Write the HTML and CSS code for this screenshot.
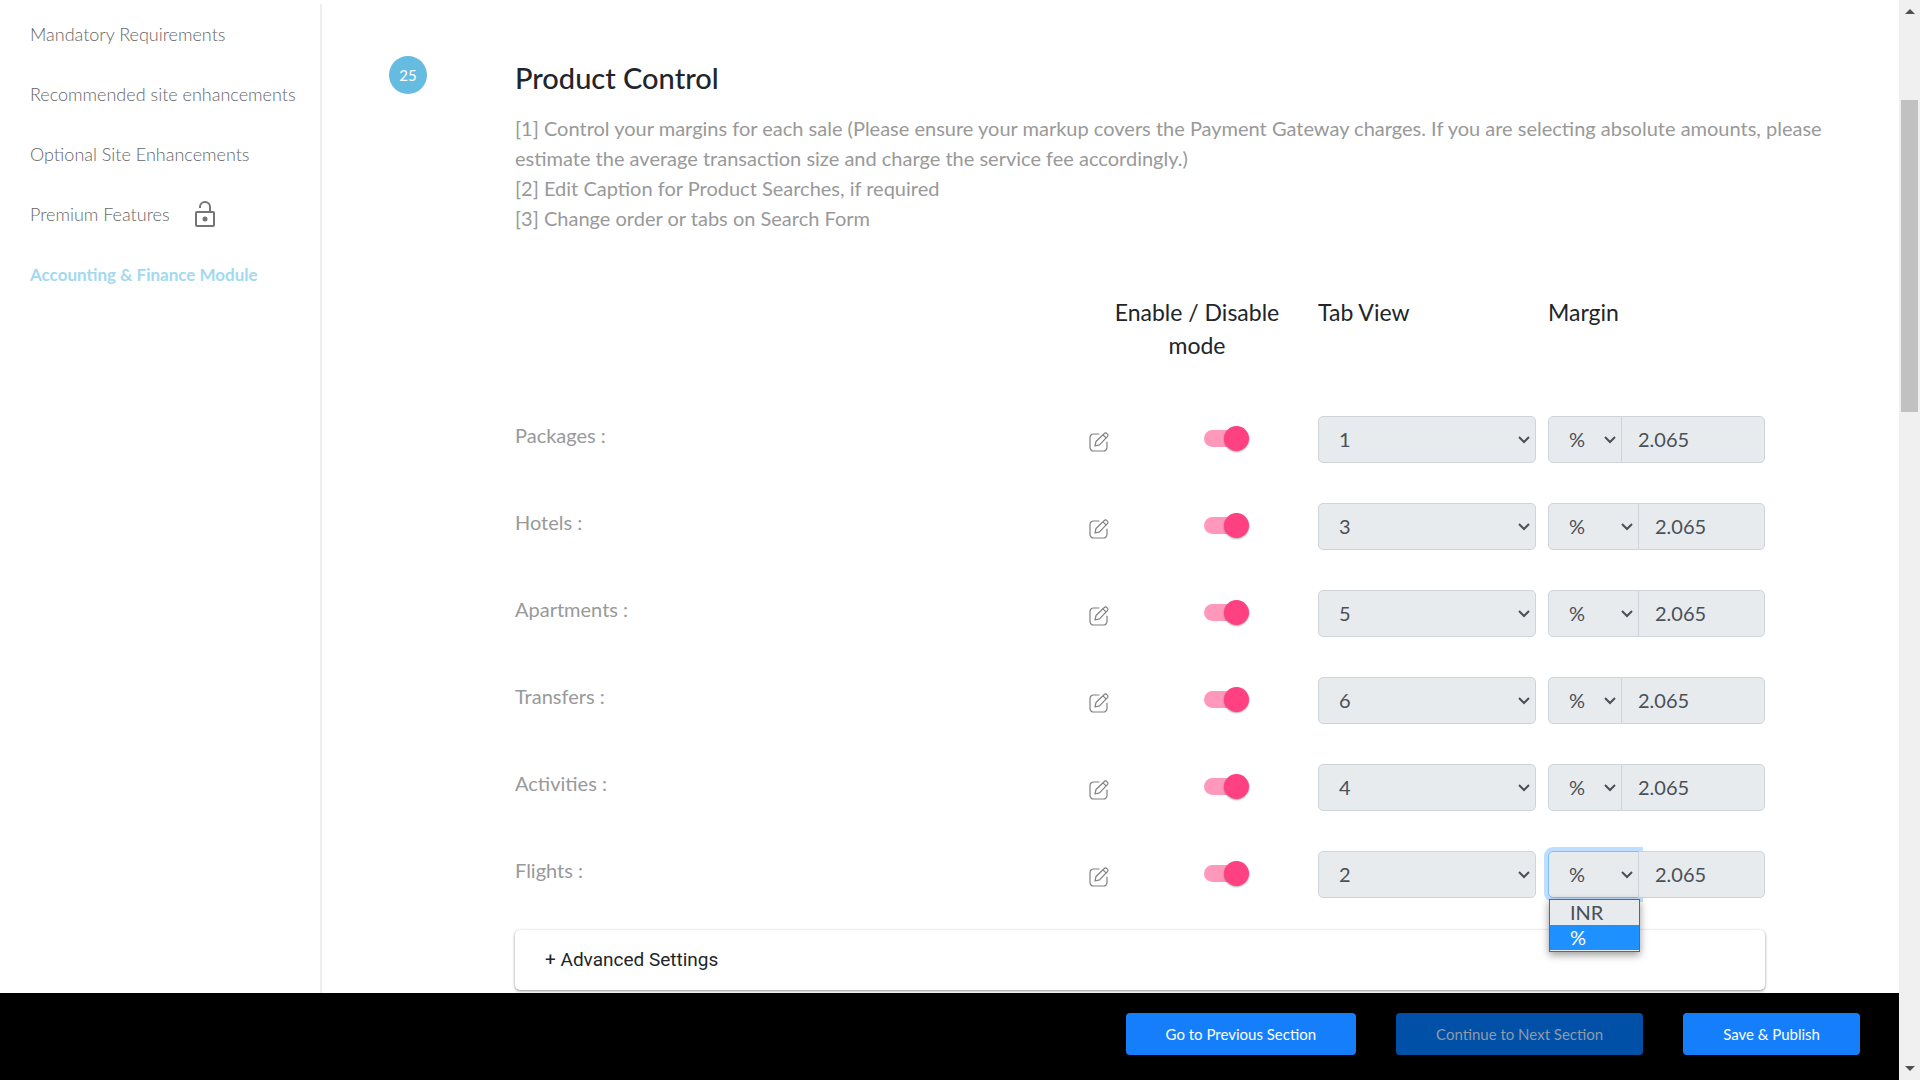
FILE: index.html
```html
<!DOCTYPE html>
<html lang="en">
<head>
<meta charset="utf-8">
<title>Product Control</title>
<link rel="stylesheet" href="styles.css">
</head>
<body>
<svg width="0" height="0" class="sprite" aria-hidden="true">
  <symbol id="edit" viewBox="0 0 20 20">
    <path d="M10 2H4.500a3.500 3.500 0 0 0-3.500 3.500v10A3.500 3.500 0 0 0 4.500 19h10a3.500 3.500 0 0 0 3.500-3.500V10M6 14l1-4.500 8.300-8a1.700 1.700 0 0 1 2.500 0l.6.600a1.700 1.700 0 0 1 0 2.500L10.500 12.800zM14 2.800l3 3" fill="none" stroke="#808080" stroke-width="1.200" stroke-linejoin="round" stroke-linecap="round"/>
  </symbol>
</svg>
<div class="window">
  <div class="page">
    <div class="body">
      <nav class="sidebar">
        <a href="#">Mandatory Requirements</a>
        <a href="#">Recommended site enhancements</a>
        <a href="#">Optional Site Enhancements</a>
        <a href="#">Premium Features
          <svg class="lock" viewBox="0 0 22 28" aria-hidden="true"><rect x="2" y="12" width="18" height="14" rx="1" fill="none" stroke="#757575" stroke-width="2"/><circle cx="11" cy="19" r="2.500" fill="#757575"/><path d="M6 8V7a5 5 0 0 1 10 0v5" fill="none" stroke="#757575" stroke-width="2"/></svg>
        </a>
        <a href="#" class="active">Accounting &amp; Finance Module</a>
      </nav>
      <main class="main">
        <div class="step">25</div>
        <section class="content">
          <h1>Product Control</h1>
          <p class="intro">[1] Control your margins for each sale (Please ensure your markup covers the Payment Gateway charges. If you are selecting absolute amounts, please<br>estimate the average transaction size and charge the service fee accordingly.)<br>[2] Edit Caption for Product Searches, if required<br>[3] Change order or tabs on Search Form</p>
          <div class="grid heads">
            <span class="mode">Enable / Disable mode</span>
            <span class="tab">Tab View</span>
            <span class="margin">Margin</span>
          </div>
          <div class="grid row">
            <label for="t1">Packages :</label>
            <button class="edit" aria-label="Edit Packages"><svg><use href="#edit"/></svg></button>
            <input type="checkbox" class="toggle" aria-label="Enable Packages" checked>
            <select id="t1" class="field tab"><option>1</option></select>
            <div class="group"><select class="field unit" aria-label="Packages unit"><option>%</option></select><input class="field value" aria-label="Packages margin" value="2.065"></div>
          </div>
          <div class="grid row">
            <label for="t2">Hotels :</label>
            <button class="edit" aria-label="Edit Hotels"><svg><use href="#edit"/></svg></button>
            <input type="checkbox" class="toggle" aria-label="Enable Hotels" checked>
            <select id="t2" class="field tab"><option>3</option></select>
            <div class="group"><select class="field unit wide" aria-label="Hotels unit"><option>%</option></select><input class="field value" aria-label="Hotels margin" value="2.065"></div>
          </div>
          <div class="grid row">
            <label for="t3">Apartments :</label>
            <button class="edit" aria-label="Edit Apartments"><svg><use href="#edit"/></svg></button>
            <input type="checkbox" class="toggle" aria-label="Enable Apartments" checked>
            <select id="t3" class="field tab"><option>5</option></select>
            <div class="group"><select class="field unit wide" aria-label="Apartments unit"><option>%</option></select><input class="field value" aria-label="Apartments margin" value="2.065"></div>
          </div>
          <div class="grid row">
            <label for="t4">Transfers :</label>
            <button class="edit" aria-label="Edit Transfers"><svg><use href="#edit"/></svg></button>
            <input type="checkbox" class="toggle" aria-label="Enable Transfers" checked>
            <select id="t4" class="field tab"><option>6</option></select>
            <div class="group"><select class="field unit" aria-label="Transfers unit"><option>%</option></select><input class="field value" aria-label="Transfers margin" value="2.065"></div>
          </div>
          <div class="grid row">
            <label for="t5">Activities :</label>
            <button class="edit" aria-label="Edit Activities"><svg><use href="#edit"/></svg></button>
            <input type="checkbox" class="toggle" aria-label="Enable Activities" checked>
            <select id="t5" class="field tab"><option>4</option></select>
            <div class="group"><select class="field unit" aria-label="Activities unit"><option>%</option></select><input class="field value" aria-label="Activities margin" value="2.065"></div>
          </div>
          <div class="grid row">
            <label for="t6">Flights :</label>
            <button class="edit" aria-label="Edit Flights"><svg><use href="#edit"/></svg></button>
            <input type="checkbox" class="toggle" aria-label="Enable Flights" checked>
            <select id="t6" class="field tab"><option>2</option></select>
            <div class="group"><select class="field unit wide open" aria-label="Flights unit"><option>%</option></select><input class="field value" aria-label="Flights margin" value="2.065">
              <ul class="options" role="listbox"><li role="option">INR</li><li role="option" class="selected" aria-selected="true">%</li></ul>
            </div>
          </div>
          <button class="advanced">+ Advanced Settings</button>
        </section>
      </main>
    </div>
    <footer class="actions">
      <button>Go to Previous Section</button>
      <button class="dim">Continue to Next Section</button>
      <button>Save &amp; Publish</button>
    </footer>
  </div>
  <div class="scrollbar" aria-hidden="true"><i class="up"></i><i class="thumb"></i><i class="down"></i></div>
</div>
</body>
</html>
```

FILE: styles.css
```css
* { box-sizing: border-box; }
body { margin: 0; background: #fff; color: #212529; font-family: Lato, "Open Sans", sans-serif; font-size: 20px; overflow: hidden; }
button, input, select { font: inherit; margin: 0; }
.sprite { position: absolute; }
.window { display: flex; height: 100vh; }
.page { flex: 1; min-width: 0; display: flex; flex-direction: column; }
.body { flex: 1; min-height: 0; display: flex; overflow: hidden; }

.sidebar { flex: none; width: 322px; margin-top: 4px; padding-left: 30px; border-right: 2px solid #eee; font-size: 18px; }
.sidebar a { display: flex; align-items: center; gap: 24px; height: 60px; color: #666; font-weight: 300; text-decoration: none; white-space: nowrap; }
.sidebar a.active { color: #a3d9ef; font-size: 17px; font-weight: 700; }
.lock { width: 22px; height: 28px; }

.main { flex: 1; min-width: 0; display: flex; align-items: flex-start; padding: 56px 48px 0 67px; }
.step { flex: none; width: 38px; height: 38px; border-radius: 50%; background: #66bbe0; color: #fff; font-size: 15px; line-height: 38px; text-align: center; }
.content { flex: 1; min-width: 0; margin-left: 88px; }
h1 { margin: 0; font-size: 29px; line-height: 44px; font-weight: 500; }
.intro { margin: 13px 0 0; color: #999; line-height: 30px; white-space: nowrap; }

.grid { display: grid; grid-template-columns: 1fr 103px 102px 218px 217px; column-gap: 12px; margin-right: 86px; }
.heads { grid-template-columns: 1fr 218px 218px 217px; margin-top: 63px; font-size: 23px; line-height: 33px; }
.heads .mode { grid-column: 2; text-align: center; }
.row { height: 47px; margin-bottom: 40px; align-items: center; }
.heads + .row { margin-top: 54px; }
.row label { color: #999; padding-bottom: 10px; }
.edit { width: 20px; height: 20px; padding: 0; border: 0; background: none; margin-top: 4px; }
.edit svg { display: block; width: 20px; height: 20px; }

.toggle { appearance: none; width: 45px; height: 25px; margin-bottom: 2px; display: flex; align-items: center; }
.toggle::before { content: ""; width: 36px; height: 17px; border-radius: 9px; background: #ff98bb; }
.toggle::after { content: ""; width: 25px; height: 25px; margin-left: -16px; border-radius: 50%; background: #ff4081; box-shadow: 0 1px 2px rgba(0, 0, 0, .35); }

.field { min-width: 0; width: 100%; height: 47px; border: 1px solid #ced4da; border-radius: 5px; background-color: #e8ebee; color: #495057; padding: 0 16px 2px; outline: 0; }
select.field { appearance: none; padding-left: 20px; background-image: url("data:image/svg+xml,%3Csvg xmlns='http://www.w3.org/2000/svg' width='12' height='8'%3E%3Cpath d='M1 1l5 5 5-5' fill='none' stroke='%23495057' stroke-width='2'/%3E%3C/svg%3E"); background-repeat: no-repeat; background-position: right 5px center; }
.group { position: relative; display: flex; }
.group .unit { flex: none; width: 74px; border-radius: 5px 0 0 5px; }
.group .wide { width: 91px; }
.group .value { flex: 1; margin-left: -1px; border-radius: 0 5px 5px 0; position: relative; }
.group .open { border-color: #80bdff; box-shadow: 0 0 0 4px #bfdeff; }
.options { position: absolute; z-index: 2; top: 48px; left: 1px; width: 91px; margin: 0; padding: 0 0 1px; list-style: none; border: 1px solid #666; background: #e8ebee; color: #495057; line-height: 25px; box-shadow: 0 3px 8px rgba(0, 0, 0, .4); }
.options li { padding-left: 20px; }
.options .selected { background: #1e90ff; color: #fff; }

.advanced { display: block; width: calc(100% - 86px); height: 60px; margin-top: -8px; padding: 0 30px 2px; border: 0; border-radius: 5px; background: #fff; color: #212529; font-family: Roboto, sans-serif; font-size: 19px; text-align: left; box-shadow: 0 1px 3px rgba(0, 0, 0, .45); }

.actions { flex: none; height: 87px; padding-right: 39px; display: flex; justify-content: flex-end; align-items: center; gap: 40px; background: #000; }
.actions button { height: 42px; padding: 0 40px; margin-bottom: 5px; border: 0; border-radius: 4px; background: #157efb; color: #fff; font-size: 15px; }
.actions .dim { background: #0050a8; color: #8f9aa8; }

.scrollbar { flex: none; width: 21px; background: #f0f0f0; display: flex; flex-direction: column; align-items: center; padding: 9px 0; }
.scrollbar .up { border: 5px solid transparent; border-top: 0; border-bottom-color: #505050; }
.scrollbar .thumb { width: 17px; height: 312px; margin-top: 86px; background: #c1c1c1; }
.scrollbar .down { margin-top: auto; border: 5px solid transparent; border-bottom: 0; border-top-color: #505050; }
```
